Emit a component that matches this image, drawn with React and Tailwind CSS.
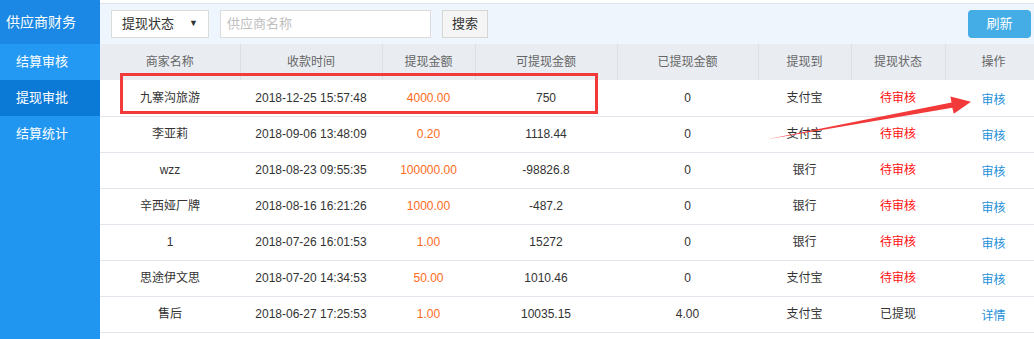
const cols = [
  { w: 140, label: "商家名称" },
  { w: 142, label: "收款时间" },
  { w: 93, label: "提现金额" },
  { w: 142, label: "可提现金额" },
  { w: 141, label: "已提现金额" },
  { w: 93, label: "提现到" },
  { w: 94, label: "提现状态" },
  { w: 97, label: "操作" },
];

const rows = [
  ["九寨沟旅游", "2018-12-25 15:57:48", "4000.00", "750", "0", "支付宝", "待审核", "审核"],
  ["李亚莉", "2018-09-06 13:48:09", "0.20", "1118.44", "0", "支付宝", "待审核", "审核"],
  ["wzz", "2018-08-23 09:55:35", "100000.00", "-98826.8", "0", "银行", "待审核", "审核"],
  ["辛西娅厂牌", "2018-08-16 16:21:26", "1000.00", "-487.2", "0", "银行", "待审核", "审核"],
  ["1", "2018-07-26 16:01:53", "1.00", "15272", "0", "银行", "待审核", "审核"],
  ["思途伊文思", "2018-07-20 14:34:53", "50.00", "1010.46", "0", "支付宝", "待审核", "审核"],
  ["售后", "2018-06-27 17:25:53", "1.00", "10035.15", "4.00", "支付宝", "已提现", "详情"],
];

const font = { fontFamily: '"Liberation Sans", "Noto Sans CJK SC", sans-serif' };

function Sidebar() {
  return (
    <aside className="w-[100px] shrink-0 bg-[#2196f0] text-white">
      <div className="h-[44px] bg-[#1a88e4] pl-[6px] flex items-center text-[14px]">供应商财务</div>
      <div className="h-[36px] bg-[#2499f3] pl-[16px] flex items-center text-[13px]">结算审核</div>
      <div className="h-[36px] bg-[#0b79d6] pl-[16px] flex items-center text-[13px]">提现审批</div>
      <div className="h-[36px] pl-[16px] flex items-center text-[13px]">结算统计</div>
    </aside>
  );
}

function Toolbar() {
  return (
    <div className="pt-[3px] bg-white">
      <div className="h-[41px] bg-[#eef5fc] border-t border-[#dfe5ec] flex items-center pl-[11px] pr-[3px] text-[13px]">
        <div className="w-[98px] h-[28px] bg-white border border-[#dcdcdc] flex items-center justify-between px-[10px] text-[#333]">
          <span>提现状态</span>
          <span className="text-[9px]">▼</span>
        </div>
        <div className="ml-[11px] w-[211px] h-[28px] bg-white border border-[#dcdcdc] flex items-center px-[6px] text-[#c0c0c0]">
          供应商名称
        </div>
        <div className="ml-[11px] w-[46px] h-[28px] bg-[#f5f5f5] border border-[#d6d6d6] flex items-center justify-center text-[#333]">
          搜索
        </div>
        <div className="ml-auto w-[63px] h-[28px] bg-[#45ade5] rounded-[4px] flex items-center justify-center text-white">
          刷新
        </div>
      </div>
    </div>
  );
}

function cellColor(ci, v) {
  if (ci === 2) return "text-[#ff6a1a]";
  if (ci === 6) return v === "待审核" ? "text-[#ff1010]" : "text-[#333]";
  if (ci === 7) return "text-[#1d8fd8] pt-[4px]";
  return "text-[#333]";
}

function Arrow() {
  return (
    <svg className="absolute left-0 top-0 pointer-events-none" width="934" height="339" viewBox="100 0 934 339">
      <polygon
        points="766,139.5 952.3,107.8 953.8,113.8 971,101.8 950.4,96.6 951.5,102.4"
        fill="#f23a3a"
      />
    </svg>
  );
}

export default function App() {
  return (
    <div className="flex h-[339px] w-[1034px] overflow-hidden bg-white" style={font}>
      <Sidebar />
      <main className="relative flex-1 min-w-0 overflow-hidden">
        <Toolbar />
        <table className="table-fixed border-collapse text-[12px]" style={{ width: 942 }}>
          <colgroup>
            {cols.map((c, i) => (
              <col key={i} style={{ width: c.w }} />
            ))}
          </colgroup>
          <thead>
            <tr className="h-[36px] bg-[#e9edf2]">
              {cols.map((c, i) => (
                <th key={i} className="font-normal text-[#666] text-center border-r border-[#dbe0e6]">
                  {c.label}
                </th>
              ))}
            </tr>
          </thead>
          <tbody>
            {rows.map((r, ri) => (
              <tr key={ri} className="h-[36px] border-b border-[#e1e6ec]">
                {r.map((v, ci) => (
                  <td key={ci} className={`text-center ${cellColor(ci, v)}`}>
                    {v}
                  </td>
                ))}
              </tr>
            ))}
          </tbody>
        </table>
        <div className="absolute left-[20px] top-[73px] w-[478px] h-[41px] border-[3px] border-[#f33a3a]" />
        <Arrow />
      </main>
    </div>
  );
}
